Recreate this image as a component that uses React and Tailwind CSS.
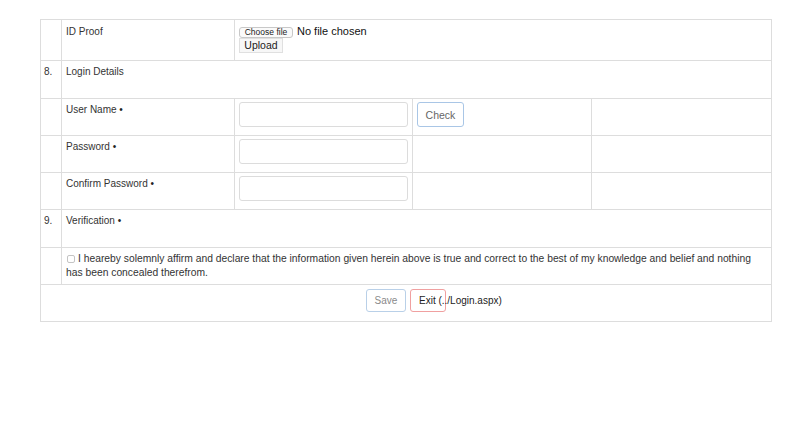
export default function App() {
  const cellBorder = "border-r border-[#dddddd]";
  const Dot = () => <span className="text-[10px] text-[#222]">•</span>;
  return (
    <div className="w-[810px] h-[433px] bg-white font-['Liberation_Sans',Arial,sans-serif] text-[10px] leading-[14px] text-[#333333]">
      <div className="pt-[19px] pl-[40px]">
        <div className="w-[732px] border border-[#dddddd]">
          {/* Row 1: ID Proof */}
          <div className="flex h-[40px]">
            <div className={`w-[21px] ${cellBorder}`}></div>
            <div className={`w-[173px] ${cellBorder} px-[4px] pt-[5px]`}>ID Proof</div>
            <div className="flex-1 px-[4px] pt-[6px]">
              <div className="flex items-center h-[12px]">
                <span className="h-[11px] w-[54px] border border-[#c8c8c8] rounded-[3px] bg-[#fafafa] text-[8.5px] leading-[9px] text-center text-[#222]">
                  Choose file
                </span>
                <span className="ml-[4px] text-[11px] leading-[12px] text-[#111] -mt-[3px]">No file chosen</span>
              </div>
              <div className="w-[44px] h-[15px] border border-[#e0e0e0] bg-[#f7f7f7] text-[10.5px] leading-[13px] text-center text-[#222]">
                Upload
              </div>
            </div>
          </div>
          {/* Row 2: Login Details */}
          <div className="flex h-[38px] border-t border-[#dddddd]">
            <div className={`w-[21px] ${cellBorder} pl-[3px] pt-[4px]`}>8.</div>
            <div className="flex-1 px-[4px] pt-[4px]">Login Details</div>
          </div>
          {/* Row 3: User Name */}
          <div className="flex h-[37px] border-t border-[#dddddd]">
            <div className={`w-[21px] ${cellBorder}`}></div>
            <div className={`w-[173px] ${cellBorder} px-[4px] pt-[4px]`}>
              User Name <Dot />
            </div>
            <div className={`w-[178px] ${cellBorder} px-[4px] pt-[3px]`}>
              <div className="w-[169px] h-[25px] border border-[#dcdcdc] rounded-[3px] bg-white"></div>
            </div>
            <div className={`w-[179px] ${cellBorder} px-[4px] pt-[3px]`}>
              <button className="w-[47px] h-[25px] border border-[#a9c6e6] rounded-[3px] bg-white text-[10.5px] text-[#666] font-['Liberation_Sans',Arial,sans-serif]">
                Check
              </button>
            </div>
            <div className="flex-1"></div>
          </div>
          {/* Row 4: Password */}
          <div className="flex h-[37px] border-t border-[#dddddd]">
            <div className={`w-[21px] ${cellBorder}`}></div>
            <div className={`w-[173px] ${cellBorder} px-[4px] pt-[4px]`}>
              Password <Dot />
            </div>
            <div className={`w-[178px] ${cellBorder} px-[4px] pt-[3px]`}>
              <div className="w-[169px] h-[25px] border border-[#dcdcdc] rounded-[3px] bg-white"></div>
            </div>
            <div className={`w-[179px] ${cellBorder}`}></div>
            <div className="flex-1"></div>
          </div>
          {/* Row 5: Confirm Password */}
          <div className="flex h-[37px] border-t border-[#dddddd]">
            <div className={`w-[21px] ${cellBorder}`}></div>
            <div className={`w-[173px] ${cellBorder} px-[4px] pt-[4px]`}>
              Confirm Password <Dot />
            </div>
            <div className={`w-[178px] ${cellBorder} px-[4px] pt-[3px]`}>
              <div className="w-[169px] h-[25px] border border-[#dcdcdc] rounded-[3px] bg-white"></div>
            </div>
            <div className={`w-[179px] ${cellBorder}`}></div>
            <div className="flex-1"></div>
          </div>
          {/* Row 6: Verification */}
          <div className="flex h-[38px] border-t border-[#dddddd]">
            <div className={`w-[21px] ${cellBorder} pl-[3px] pt-[4px]`}>9.</div>
            <div className="flex-1 px-[4px] pt-[4px]">
              Verification <Dot />
            </div>
          </div>
          {/* Row 7: Declaration */}
          <div className="flex h-[37px] border-t border-[#dddddd]">
            <div className={`w-[21px] ${cellBorder}`}></div>
            <div className="flex-1 pl-[4px] pr-[8px] pt-[4px] text-[10.3px] leading-[14px]">
              <span className="inline-block w-[8px] h-[8px] border border-[#c4c4c4] rounded-[2px] align-[-1px] mr-[3px] ml-[1px]"></span>
              I heareby solemnly affirm and declare that the information given herein above is true and correct to the best of my knowledge and belief and nothing has been concealed therefrom.
            </div>
          </div>
          {/* Row 8: Buttons */}
          <div className="flex justify-center gap-[4px] h-[37px] border-t border-[#dddddd] pt-[4px]">
            <button className="w-[40px] h-[23px] border border-[#b9d0e8] rounded-[3px] bg-white text-[10px] text-[#8a8a8a] font-['Liberation_Sans',Arial,sans-serif]">
              Save
            </button>
            <button className="w-[36px] h-[23px] border border-[#f0a0a0] rounded-[3px] bg-white text-[10px] text-[#222] text-left pl-[8px] whitespace-nowrap overflow-visible font-['Liberation_Sans',Arial,sans-serif]">
              Exit (../Login.aspx)
            </button>
          </div>
        </div>
      </div>
    </div>
  );
}
